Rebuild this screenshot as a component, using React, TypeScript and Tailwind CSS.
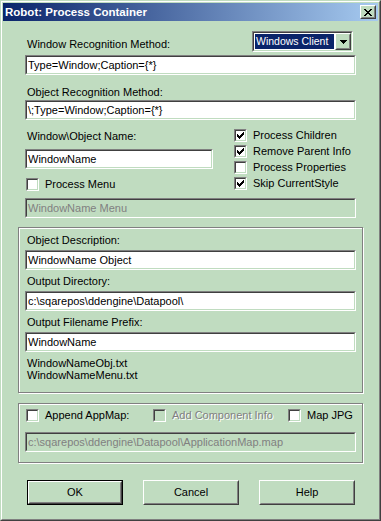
import React from "react";

const CHECK_PIXELS: [number, number][] = [
  [6, 0],
  [5, 1], [6, 1],
  [0, 2], [4, 2], [5, 2], [6, 2],
  [0, 3], [1, 3], [3, 3], [4, 3], [5, 3],
  [0, 4], [1, 4], [2, 4], [3, 4], [4, 4],
  [1, 5], [2, 5], [3, 5],
  [2, 6],
];

function Sunken({ className = "", innerClassName = "", children }: { className?: string; innerClassName?: string; children?: React.ReactNode }) {
  return (
    <div className={`border border-t-[#808080] border-l-[#808080] border-b-white border-r-white ${className}`}>
      <div className={`h-full w-full border border-t-[#404040] border-l-[#404040] border-b-[#c0dcc0] border-r-[#c0dcc0] ${innerClassName}`}>
        {children}
      </div>
    </div>
  );
}

function Raised({ className = "", innerClassName = "", children }: { className?: string; innerClassName?: string; children?: React.ReactNode }) {
  return (
    <div className={`border border-t-white border-l-white border-b-[#404040] border-r-[#404040] ${className}`}>
      <div className={`h-full w-full border border-t-[#c0dcc0] border-l-[#c0dcc0] border-b-[#808080] border-r-[#808080] bg-[#c0dcc0] ${innerClassName}`}>
        {children}
      </div>
    </div>
  );
}

function TextField({ value, disabled = false, className = "" }: { value: string; disabled?: boolean; className?: string }) {
  return (
    <Sunken
      className={`h-[20px] ${className}`}
      innerClassName={`${disabled ? "bg-[#c0dcc0] text-[#808080]" : "bg-white text-black"} pl-[1px] leading-[16px] whitespace-nowrap overflow-hidden`}
    >
      {value}
    </Sunken>
  );
}

function CheckBox({ checked = false, disabled = false, label, className = "" }: { checked?: boolean; disabled?: boolean; label: string; className?: string }) {
  return (
    <div className={`flex items-center h-[13px] ${className}`}>
      <Sunken className="w-[13px] h-[13px] shrink-0" innerClassName={disabled ? "bg-[#c0dcc0]" : "bg-white"}>
        {checked && (
          <svg width="9" height="9" viewBox="0 0 9 9" shapeRendering="crispEdges" className="block">
            {CHECK_PIXELS.map(([x, y], i) => (
              <rect key={i} x={x + 1} y={y + 1} width="1" height="1" fill="#000" />
            ))}
          </svg>
        )}
      </Sunken>
      <span
        className={`ml-[6px] leading-[13px] whitespace-nowrap ${disabled ? "text-[#808080] [text-shadow:1px_1px_0_#fff]" : "text-black"}`}
      >
        {label}
      </span>
    </div>
  );
}

function Label({ children, className = "" }: { children: React.ReactNode; className?: string }) {
  return <div className={`leading-[13px] h-[13px] whitespace-nowrap ${className}`}>{children}</div>;
}

function Button({ label, isDefault = false, className = "" }: { label: string; isDefault?: boolean; className?: string }) {
  const body = (
    <Raised className="h-full w-full" innerClassName="flex items-center justify-center">
      <span className="leading-[13px]">{label}</span>
    </Raised>
  );
  return isDefault ? (
    <div className={`w-[96px] h-[25px] border border-black ${className}`}>{body}</div>
  ) : (
    <div className={`w-[96px] h-[25px] ${className}`}>{body}</div>
  );
}

function Dropdown({ className = "" }: { className?: string }) {
  return (
    <Sunken className={`w-[101px] h-[21px] ${className}`} innerClassName="bg-white flex">
      <div className="flex-1 m-px bg-[#0a246a] text-white text-[10.5px] leading-[15px] pl-px whitespace-nowrap overflow-hidden">
        Windows Client
      </div>
      <Raised className="w-[16px] h-[17px] shrink-0" innerClassName="flex items-center justify-center">
        <svg width="7" height="4" viewBox="0 0 7 4" shapeRendering="crispEdges" className="block">
          <path d="M0 0h7v1H0zM1 1h5v1H1zM2 2h3v1H2zM3 3h1v1H3z" fill="#000" />
        </svg>
      </Raised>
    </Sunken>
  );
}

function GroupBox({ className = "", children }: { className?: string; children: React.ReactNode }) {
  return (
    <div className={`border border-[#808080] shadow-[inset_1px_1px_0_#fff,1px_1px_0_#fff] ${className}`}>
      {children}
    </div>
  );
}

export default function App() {
  return (
    <div className="w-[381px] h-[521px] bg-[#c0dcc0] border border-t-[#c0dcc0] border-l-[#c0dcc0] border-b-[#404040] border-r-[#404040] font-['Liberation_Sans',Arial,sans-serif] text-[11px] text-black">
      <div className="h-full border border-t-white border-l-white border-b-[#808080] border-r-[#808080] p-px flex flex-col">
        {/* Title bar */}
        <div className="h-[18px] shrink-0 flex items-center justify-between bg-[linear-gradient(to_right,#0a246a,#a6caf0)] pl-[2px] pr-[2px]">
          <span className="text-white font-bold text-[11.5px] leading-[14px] whitespace-nowrap">Robot: Process Container</span>
          <Raised className="w-[16px] h-[14px]" innerClassName="flex items-center justify-center">
            <svg width="8" height="7" viewBox="0 0 8 7" shapeRendering="crispEdges" className="block">
              <path d="M0 0h2v1H0zM6 0h2v1H6zM1 1h2v1H1zM5 1h2v1H5zM2 2h4v1H2zM3 3h2v1H3zM2 4h4v1H2zM1 5h2v1H1zM5 5h2v1H5zM0 6h2v1H0zM6 6h2v1H6z" fill="#000" />
            </svg>
          </Raised>
        </div>

        {/* Content */}
        <div className="flex-1 pl-[15px] pr-[15px]">
          <div className="mt-[10px] h-[21px] flex items-end justify-between">
            <span className="ml-[9px] mb-[1px] leading-[13px] whitespace-nowrap">Window Recognition Method:</span>
            <Dropdown className="mr-[10px]" />
          </div>
          <TextField className="mt-[3px] mx-[7px]" value="Type=Window;Caption={*}" />

          <Label className="mt-[11px] ml-[9px]">Object Recognition Method:</Label>
          <TextField className="mt-[1px] mx-[7px]" value="\;Type=Window;Caption={*}" />

          <div className="flex ml-[7px]">
            <div className="w-[188px]">
              <Label className="mt-[10px] ml-[2px]">Window\Object Name:</Label>
              <TextField className="mt-[6px]" value="WindowName" />
              <CheckBox className="mt-[9px] ml-[1px]" label="Process Menu" />
            </div>
            <div className="ml-[21px] mt-[9px] flex flex-col gap-[3px]">
              <CheckBox checked label="Process Children" />
              <CheckBox checked label="Remove Parent Info" />
              <CheckBox label="Process Properties" />
              <CheckBox checked label="Skip CurrentStyle" />
            </div>
          </div>

          <TextField className="mt-[7px] mx-[7px]" value="WindowName Menu" disabled />

          <GroupBox className="mt-[9px] h-[166px] px-[6px] pt-[6px]">
            <Label className="ml-[2px]">Object Description:</Label>
            <TextField className="mt-[3px]" value="WindowName Object" />
            <Label className="mt-[5px] ml-[2px]">Output Directory:</Label>
            <TextField className="mt-[3px]" value="c:\sqarepos\ddengine\Datapool\" />
            <Label className="mt-[5px] ml-[2px]">Output Filename Prefix:</Label>
            <TextField className="mt-[3px]" value="WindowName" />
            <div className="mt-[5px] ml-[2px] leading-[12px]">
              <div>WindowNameObj.txt</div>
              <div>WindowNameMenu.txt</div>
            </div>
          </GroupBox>

          <GroupBox className="mt-[10px] h-[60px] px-[6px] pt-[5px]">
            <div className="flex">
              <div className="w-[127px] ml-[1px]">
                <CheckBox label="Append AppMap:" />
              </div>
              <div className="w-[135px]">
                <CheckBox label="Add Component Info" disabled />
              </div>
              <CheckBox label="Map JPG" />
            </div>
            <TextField className="mt-[10px]" value="c:\sqarepos\ddengine\Datapool\ApplicationMap.map" disabled />
          </GroupBox>

          <div className="mt-[17px] ml-[9px] flex gap-[20px]">
            <Button label="OK" isDefault />
            <Button label="Cancel" />
            <Button label="Help" />
          </div>
        </div>
      </div>
    </div>
  );
}
